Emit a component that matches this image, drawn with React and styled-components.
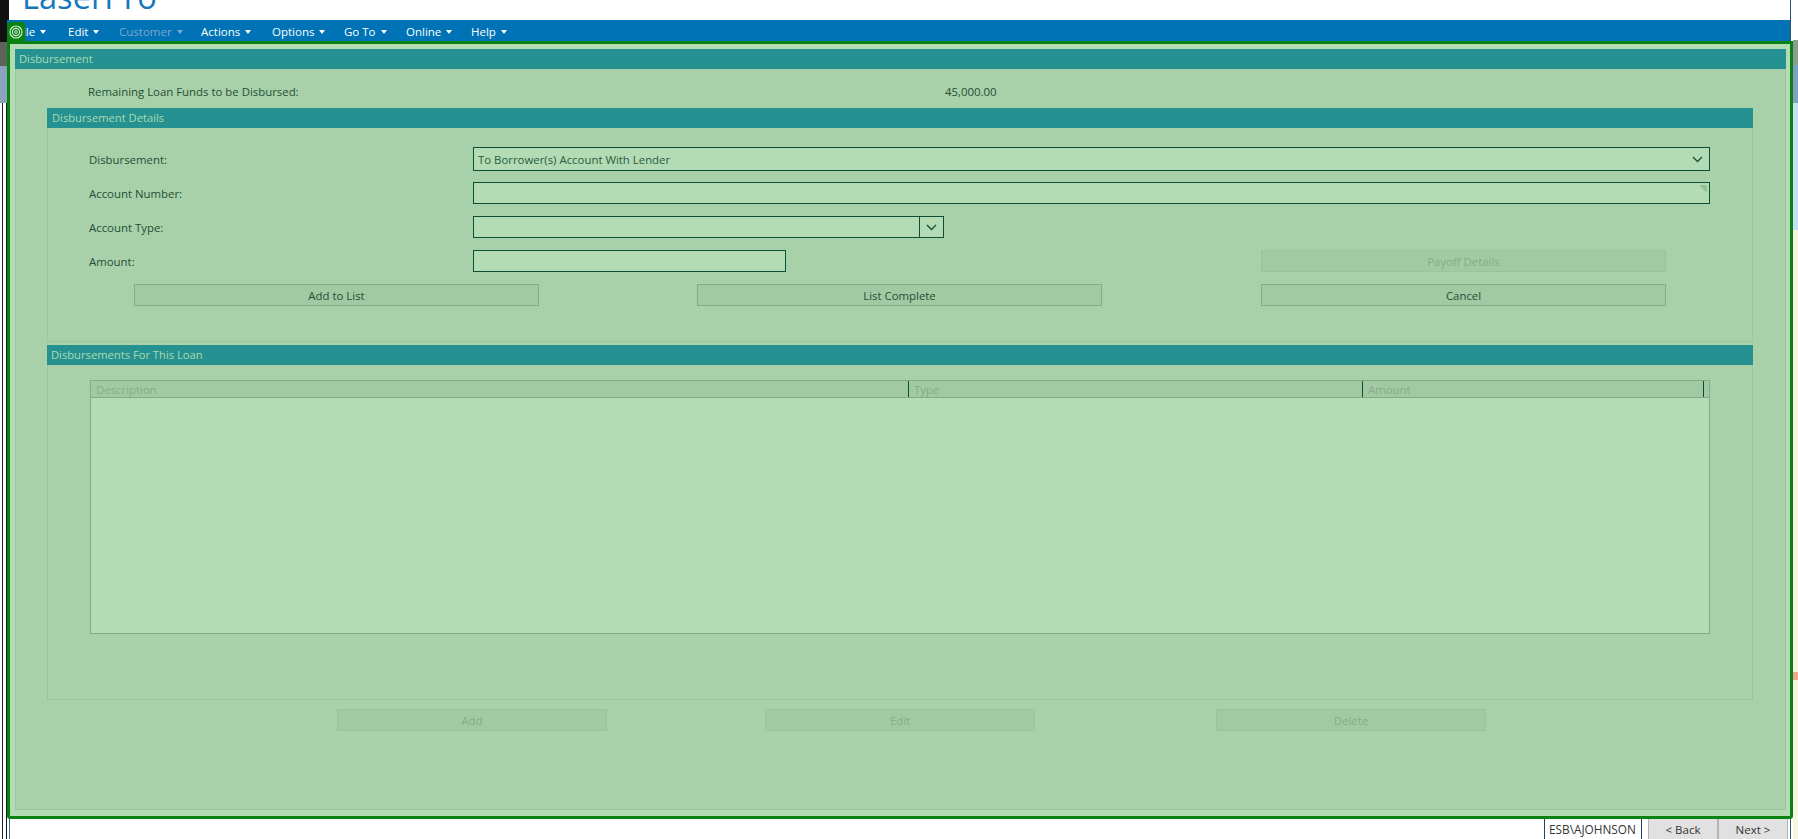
import React from "react";
import styled, { createGlobalStyle } from "styled-components";

const Global = createGlobalStyle`
  html, body { margin: 0; padding: 0; background: #fff; }
  body { font-family: "Open Sans", "Liberation Sans", sans-serif; font-size: 11.4px; color: #234f37; }
  * { box-sizing: border-box; }
`;

const Page = styled.div`
  display: flex;
  width: 1798px;
  height: 839px;
  overflow: hidden;
`;

const LeftEdge = styled.div`
  width: 7px;
  display: flex;
  flex-direction: column;
`;

const RightEdge = styled.div`
  width: 5px;
  display: flex;
  flex-direction: column;
`;

const EdgeBlock = styled.div`
  height: ${(p) => p.$h}px;
  flex: ${(p) => (p.$h ? "none" : 1)};
  background: ${(p) => p.$c};
`;

const DesktopLines = styled.div`
  flex: 1;
  background: linear-gradient(90deg, #fff 0 2px, #16252c 2px 3px, #fff 3px 6px, #10181c 6px 7px);
`;

const Center = styled.div`
  position: relative;
  flex: 1;
  display: flex;
  flex-direction: column;
  min-width: 0;
`;

const Banner = styled.div`
  height: 20px;
  flex: none;
  margin-right: 2px;
  border-left: 2px solid #111;
  border-right: 1px solid #2b5470;
  background: #fff;
  overflow: hidden;
  display: flex;
  align-items: flex-end;
  padding: 0 0 8px 13px;
`;

const Brand = styled.div`
  font-size: 32.6px;
  line-height: 30px;
  color: #1677ba;
  white-space: nowrap;
`;

const Nav = styled.nav`
  height: 21px;
  flex: none;
  margin-right: 2px;
  border-right: 1px solid #2b5470;
  background: #0072b6;
  display: flex;
  align-items: center;
  padding: 2px 0 0 10px;
`;

const NavItem = styled.div`
  display: flex;
  align-items: center;
  gap: 5px;
  width: ${(p) => p.$w}px;
  font-size: 11.5px;
  color: ${(p) => (p.$off ? "#7fa9c9" : "#fff")};
  white-space: nowrap;
`;

const Caret = styled.span`
  width: 0;
  height: 0;
  border-left: 3.5px solid transparent;
  border-right: 3.5px solid transparent;
  border-top: 4px solid currentColor;
`;

const Badge = styled.div`
  position: absolute;
  left: 0;
  top: 22px;
  width: 18px;
  height: 20px;
  background: #0a8212;
  border-radius: 4px 4px 0 0;
  display: flex;
  align-items: center;
  justify-content: center;
`;

const Frame = styled.main`
  flex: 1;
  border: 3px solid #0a8212;
  border-radius: 0 0 3px 3px;
  background: #b3dcb4;
  padding: 5px 4px 6px 5px;
  display: flex;
`;

const Panel = styled.div`
  flex: 1;
  display: flex;
  flex-direction: column;
  background: #a9d1a9;
  box-shadow: inset 0 0 0 1px #9cc49d;
`;

const TealBar = styled.div`
  height: 20px;
  flex: none;
  background: #259190;
  color: #a9dbb0;
  font-size: 11.2px;
  line-height: 20px;
  padding-left: ${(p) => p.$pad}px;
  margin-top: ${(p) => p.$top || 0}px;
`;

const Remaining = styled.div`
  height: 39px;
  flex: none;
  display: flex;
  align-items: center;
  padding: 5px 0 0 73px;
`;

const Label = styled.div`
  width: ${(p) => p.$w}px;
  flex: none;
  white-space: nowrap;
`;

const Section = styled.section`
  margin: 0 33px 0 32px;
  display: flex;
  flex-direction: column;
`;

const SectionBody = styled.div`
  height: ${(p) => p.$h}px;
  border: 1px solid #9cc49d;
  border-top: 0;
  padding: ${(p) => p.$pad};
`;

const Form = styled.div`
  display: flex;
  flex-direction: column;
  gap: 12px;
`;

const FormRow = styled.div`
  display: flex;
  align-items: center;
  margin-top: ${(p) => (p.$tight ? -1 : 0)}px;
`;

const Field = styled.div`
  position: relative;
  height: ${(p) => p.$h || 22}px;
  width: ${(p) => p.$w}px;
  flex: none;
  background: #b3dcb4;
  border: 1px solid #0b4f38;
  display: flex;
  align-items: center;
  padding-left: 4px;
  color: #2a5b3f;
`;

const FieldText = styled.span`
  flex: 1;
`;

const ChevronBox = styled.div`
  width: ${(p) => p.$w}px;
  align-self: stretch;
  border-left: ${(p) => (p.$split ? "1px solid #0b4f38" : "0")};
  display: flex;
  align-items: center;
  justify-content: center;
`;

const Corner = styled.div`
  position: absolute;
  right: 2px;
  top: 2px;
  width: 0;
  height: 0;
  border-top: 8px solid #8fc291;
  border-left: 8px solid transparent;
`;

const Button = styled.button`
  width: ${(p) => p.$w || 405}px;
  height: 22px;
  flex: none;
  margin-left: ${(p) => p.$ml || 0}px;
  padding: 0;
  font: inherit;
  background: #a2caa2;
  border: 1px solid ${(p) => (p.disabled ? "#9bc29c" : "#84aa87")};
  color: ${(p) => (p.disabled ? "#84ac88" : "#234f37")};
`;

const ButtonRow = styled.div`
  display: flex;
  margin-left: ${(p) => p.$ml}px;
  gap: ${(p) => p.$gap}px;
  margin-top: ${(p) => p.$mt || 0}px;
`;

const Table = styled.div`
  height: 254px;
  background: #b3dcb4;
  border: 1px solid #84aa87;
  display: flex;
  flex-direction: column;
`;

const THead = styled.div`
  height: 17px;
  flex: none;
  display: flex;
  background: #a2caa2;
  border-bottom: 1px solid #84aa87;
`;

const Th = styled.div`
  width: ${(p) => p.$w}px;
  flex: none;
  padding-left: 5px;
  line-height: 17px;
  color: #84ac88;
  border-right: 1px solid #0b4f38;
`;

const Chevron = () => (
  <svg width="11" height="7" viewBox="0 0 11 7" fill="none">
    <path d="M1 1l4.5 4.5L10 1" stroke="#1d4f39" strokeWidth="1.4" />
  </svg>
);

const Target = () => (
  <svg width="14" height="14" viewBox="0 0 14 14" fill="none" stroke="#cfe8cf">
    <circle cx="7" cy="7" r="6" strokeWidth="1.2" />
    <circle cx="7" cy="7" r="3.6" strokeWidth="1.1" />
    <circle cx="7" cy="7" r="1.4" strokeWidth="1" />
  </svg>
);

const StatusBar = styled.footer`
  height: 20px;
  flex: none;
  margin-left: 2px;
  margin-right: 2px;
  background: #fff;
  border-left: 1px solid #4c6a86;
  border-right: 1px solid #2b5470;
  display: flex;
  justify-content: flex-end;
  padding-right: 2px;
`;

const UserBox = styled.div`
  width: 98px;
  margin-right: 6px;
  border-left: 1px solid #1f4660;
  border-right: 1px solid #1f4660;
  padding-left: 4px;
  font-size: 11.8px;
  line-height: 21px;
  color: #333;
  white-space: nowrap;
`;

const NavButton = styled.div`
  width: 70px;
  background: #e1e1e1;
  border-right: 1px solid #b4b4b8;
  border-left: 1px solid #b4b4b8;
  text-align: center;
  font-size: 11.5px;
  line-height: 21px;
  color: #333;
`;

const navItems = [
  ["File", 51],
  ["Edit", 51],
  ["Customer", 82, true],
  ["Actions", 71],
  ["Options", 72],
  ["Go To", 62],
  ["Online", 65],
  ["Help", 50],
];

export default function App() {
  return (
    <Page>
      <Global />
      <LeftEdge>
        <EdgeBlock $h={42} $c="#111" />
        <EdgeBlock $h={24} $c="#5d635c" />
        <EdgeBlock $h={37} $c="#8ca2bd" />
        <DesktopLines />
      </LeftEdge>
      <Center>
        <Banner>
          <Brand>LaserPro</Brand>
        </Banner>
        <Nav>
          {navItems.map(([name, w, off]) => (
            <NavItem key={name} $w={w} $off={off}>
              {name}
              <Caret />
            </NavItem>
          ))}
        </Nav>
        <Badge>
          <Target />
        </Badge>
        <Frame>
          <Panel>
            <TealBar $pad={4}>Disbursement</TealBar>
            <Remaining>
              <Label $w={857}>Remaining Loan Funds to be Disbursed:</Label>
              <Label $w={80}>45,000.00</Label>
            </Remaining>
            <Section>
              <TealBar $pad={5}>Disbursement Details</TealBar>
              <SectionBody $h={214} $pad="19px 0 0 41px">
                <Form>
                  <FormRow>
                    <Label $w={384}>Disbursement:</Label>
                    <Field $w={1237} $h={24}>
                      <FieldText>To Borrower(s) Account With Lender</FieldText>
                      <ChevronBox $w={24}>
                        <Chevron />
                      </ChevronBox>
                    </Field>
                  </FormRow>
                  <FormRow $tight>
                    <Label $w={384}>Account Number:</Label>
                    <Field $w={1237}>
                      <Corner />
                    </Field>
                  </FormRow>
                  <FormRow>
                    <Label $w={384}>Account Type:</Label>
                    <Field $w={471}>
                      <FieldText />
                      <ChevronBox $w={24} $split>
                        <Chevron />
                      </ChevronBox>
                    </Field>
                  </FormRow>
                  <FormRow>
                    <Label $w={384}>Amount:</Label>
                    <Field $w={313} />
                    <Button disabled $ml={475}>
                      Payoff Details
                    </Button>
                  </FormRow>
                  <ButtonRow $ml={45} $gap={158}>
                    <Button>Add to List</Button>
                    <Button>List Complete</Button>
                    <Button $ml={1}>Cancel</Button>
                  </ButtonRow>
                </Form>
              </SectionBody>
            </Section>
            <Section>
              <TealBar $pad={4} $top={3}>Disbursements For This Loan</TealBar>
              <SectionBody $h={335} $pad="15px 42px 0 42px">
                <Table>
                  <THead>
                    <Th $w={818}>Description</Th>
                    <Th $w={454}>Type</Th>
                    <Th $w={341}>Amount</Th>
                  </THead>
                </Table>
              </SectionBody>
            </Section>
            <ButtonRow $ml={322} $gap={158} $mt={9}>
              <Button disabled $w={270}>Add</Button>
              <Button disabled $w={270}>Edit</Button>
              <Button disabled $w={270} $ml={23}>Delete</Button>
            </ButtonRow>
          </Panel>
        </Frame>
        <StatusBar>
          <UserBox>ESB\AJOHNSON</UserBox>
          <NavButton>&lt; Back</NavButton>
          <NavButton>Next &gt;</NavButton>
        </StatusBar>
      </Center>
      <RightEdge>
        <EdgeBlock $h={40} $c="#fff" />
        <EdgeBlock $h={25} $c="#8b9c90" />
        <EdgeBlock $h={38} $c="#7f9fc4" />
        <EdgeBlock $h={127} $c="#c5e0f4" />
        <EdgeBlock $h={442} $c="#f6f6de" />
        <EdgeBlock $h={8} $c="#eda98c" />
        <EdgeBlock $c="#f6f6de" />
      </RightEdge>
    </Page>
  );
}
